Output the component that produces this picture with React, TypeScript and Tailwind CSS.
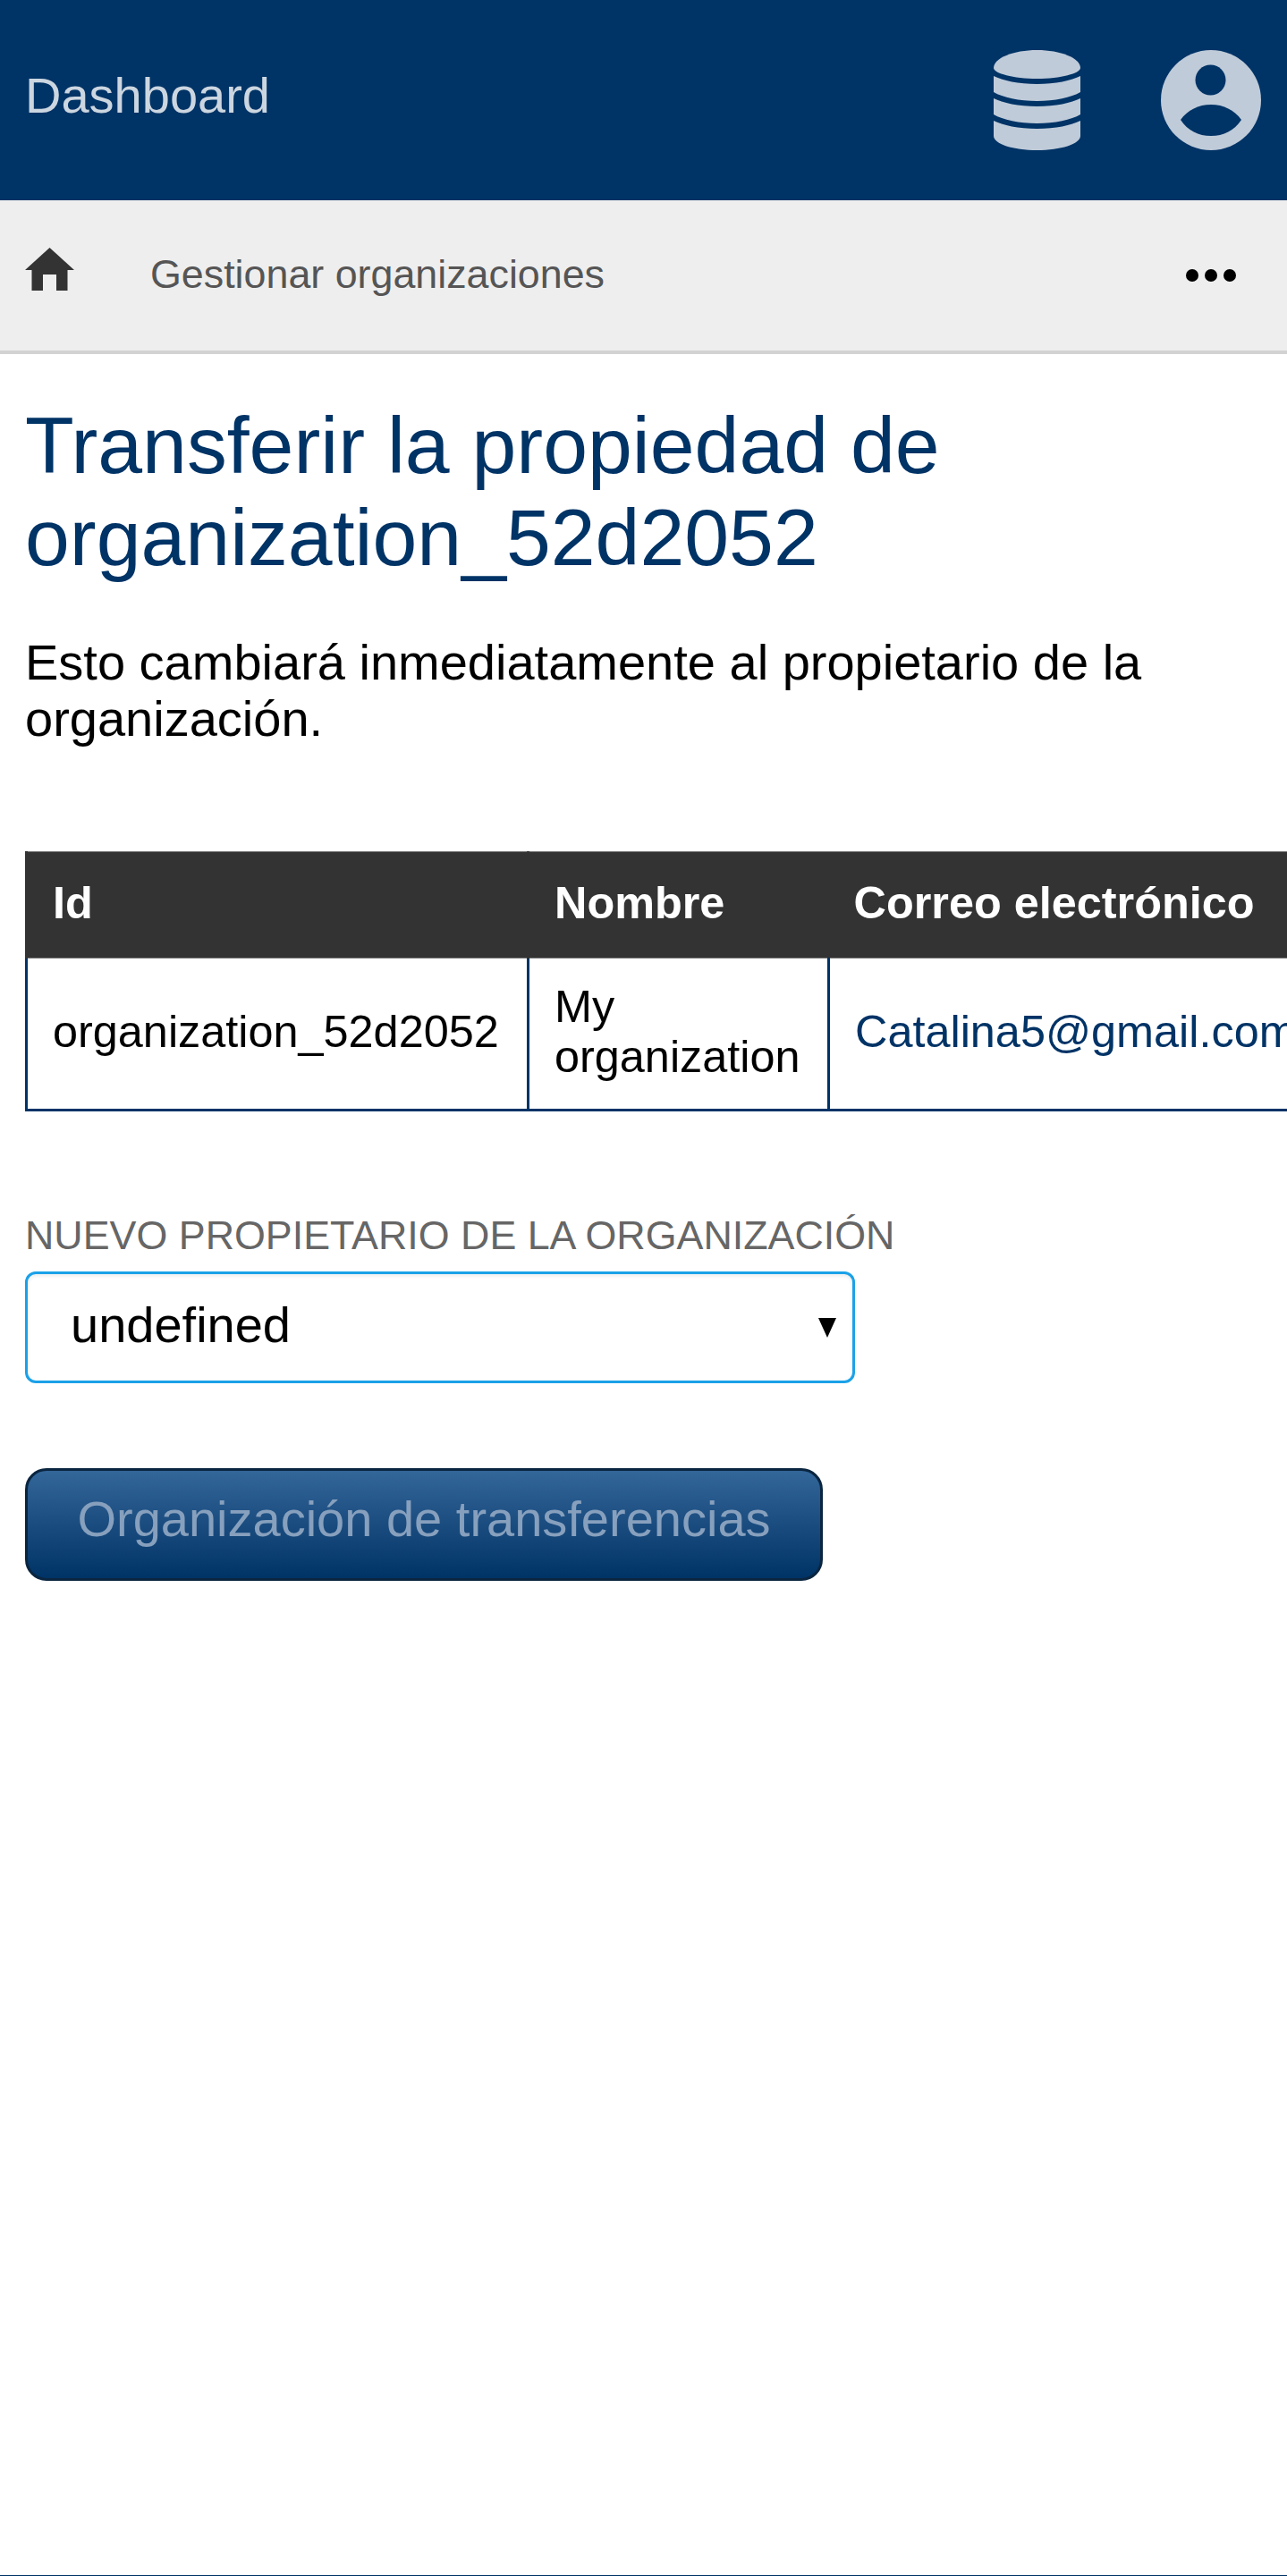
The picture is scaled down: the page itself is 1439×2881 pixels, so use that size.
function DatabaseIcon() {
  return (
    <svg viewBox="0 0 97 112" className="h-[112px] w-[97px] fill-[#bfcbd9]">
      <path d="M0 20C0 9 22 0 48.5 0S97 9 97 20C97 26 75 32 48.5 32S0 26 0 20z" />
      <path d="M0 29C10 34 28 38 48.5 38S87 34 97 29V47C87 53 68 57 48.5 57S10 53 0 47z" />
      <path d="M0 54C10 59 28 63 48.5 63S87 59 97 54V72C87 78 68 82 48.5 82S10 78 0 72z" />
      <path d="M0 79C10 84 28 88 48.5 88S87 84 97 79V96C97 105 75 112 48.5 112S0 105 0 96z" />
    </svg>
  );
}

function UserIcon() {
  return (
    <svg viewBox="0 0 112 112" className="h-[112px] w-[112px]">
      <circle cx="56" cy="56" r="56" fill="#bfcbd9" />
      <circle cx="55.5" cy="33.5" r="17" fill="#003366" />
      <path d="M22 78C30 67 42 61 56 61S82 67 90 78C82 90 70 96 56 96S30 90 22 78z" fill="#003366" />
    </svg>
  );
}

function HomeIcon() {
  return (
    <svg viewBox="0 0 55 48" className="h-[48px] w-[55px] fill-[#333333]">
      <path d="M27.5 0 55 25H47.5V48H35V30H20V48H7.5V25H0z" />
    </svg>
  );
}

export default function App() {
  return (
    <div className="flex min-h-[2881px] flex-col overflow-hidden border-b border-[#003366] bg-white font-['Liberation_Sans',Arial,sans-serif]">
      {/* Header */}
      <header className="flex h-[224px] items-center justify-between bg-[#003366] pl-[28px] pr-[29px]">
        <span className="pb-[10px] text-[56px] text-[#ccd6e0]">Dashboard</span>
        <div className="flex items-center gap-[90px]">
          <DatabaseIcon />
          <UserIcon />
        </div>
      </header>

      {/* Nav */}
      <nav className="flex h-[172px] items-center border-b-4 border-[#d2d2d2] bg-[#eeeeee] pl-[28px] pr-[57px]">
        <div className="mb-[14px]">
          <HomeIcon />
        </div>
        <span className="ml-[85px] pb-[3px] text-[44.8px] text-[#555555]">Gestionar organizaciones</span>
        <div className="ml-auto flex gap-[7px]">
          <span className="h-[14px] w-[14px] rounded-full bg-black" />
          <span className="h-[14px] w-[14px] rounded-full bg-black" />
          <span className="h-[14px] w-[14px] rounded-full bg-black" />
        </div>
      </nav>

      {/* Main Content */}
      <main className="px-[28px] pt-[51px]">
        <h1 className="text-[89.6px] leading-[103px] text-[#003366]">
          Transferir la propiedad de organization_52d2052
        </h1>
        <p className="mt-[56px] text-[56px] leading-[63px] text-black">
          Esto cambiará inmediatamente al propietario de la organización.
        </p>

        <table className="mt-[117px] w-[1420px] table-fixed border-collapse text-[50.4px]">
          <thead>
            <tr className="h-[119px] bg-[#333333] text-left font-bold text-white">
              <th className="w-[561px] border-x-[3px] border-t border-b border-x-[#333333] border-y-[#777777] pb-[5px] pl-[28px]">Id</th>
              <th className="w-[336px] border-t border-b border-[#777777] pb-[5px] pl-[28px]">Nombre</th>
              <th className="border-t border-b border-[#777777] pb-[5px] pl-[28px] whitespace-nowrap">Correo electrónico</th>
            </tr>
          </thead>
          <tbody>
            <tr className="h-[170px] border-b-[3px] border-[#003366] text-black">
              <td className="border-x-[3px] border-[#003366] pb-[5px] pl-[28px]">organization_52d2052</td>
              <td className="border-x-[3px] border-[#003366] pb-[5px] pl-[28px] leading-[56px]">My organization</td>
              <td className="border-l-[3px] border-[#003366] pb-[5px] pl-[28px] text-[#003366] whitespace-nowrap">Catalina5@gmail.com</td>
            </tr>
          </tbody>
        </table>

        <label className="mt-[113px] block text-[44.8px] leading-[50px] text-[#666666]">
          NUEVO PROPIETARIO DE LA ORGANIZACIÓN
        </label>
        <div className="mt-[16px] flex h-[125px] w-[928px] items-center justify-between rounded-[12px] border-[3px] border-[#1ba1e8] pl-[48px] pr-[18px] shadow-[inset_0_2px_4px_rgba(0,0,0,0.08)]">
          <span className="pb-[6px] text-[56px] text-black">undefined</span>
          <svg viewBox="0 0 20 22" className="h-[22px] w-[20px] fill-black">
            <path d="M0 0h20L10 22z" />
          </svg>
        </div>

        <button className="mt-[95px] block h-[126px] w-[892px] rounded-[24px] border-[3px] border-[#0a2540] bg-gradient-to-b from-[#336699] to-[#003366] pb-[12px] text-[56px] text-[#87a0bd]">
          Organización de transferencias
        </button>
      </main>
    </div>
  );
}
